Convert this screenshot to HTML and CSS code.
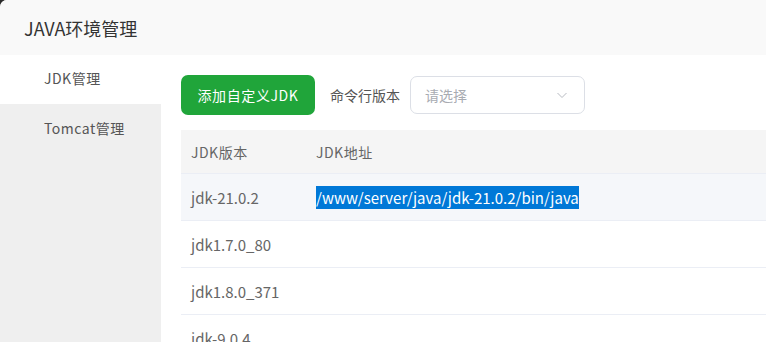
FILE: index.html
```html
<!DOCTYPE html>
<html lang="zh-CN">
<head>
  <meta charset="UTF-8">
  <meta name="viewport" content="width=device-width, initial-scale=1.0">
  <title>JAVA环境管理</title>
  <link rel="stylesheet" href="styles.css">
</head>
<body>
  <div class="dialog">
    <div class="dialog-header">JAVA环境管理</div>

    <div class="dialog-body">
      <ul class="side-menu">
        <li class="active">JDK管理</li>
        <li>Tomcat管理</li>
      </ul>

      <div class="content">
        <div class="toolbar">
          <button class="btn-green">添加自定义JDK</button>
          <span class="toolbar-label">命令行版本</span>
          <div class="select">
            <span class="placeholder">请选择</span>
            <svg class="arrow" width="12" height="12" viewBox="0 0 12 12">
              <path d="M1.5 4 L6 8.5 L10.5 4" fill="none" stroke="#b8bbc2" stroke-width="1"/>
            </svg>
          </div>
        </div>

        <table class="jdk-table">
          <thead>
            <tr>
              <th class="col-version">JDK版本</th>
              <th>JDK地址</th>
            </tr>
          </thead>
          <tbody>
            <tr class="hover">
              <td>jdk-21.0.2</td>
              <td><span class="selected-text">/www/server/java/jdk-21.0.2/bin/java</span></td>
            </tr>
            <tr>
              <td>jdk1.7.0_80</td>
              <td></td>
            </tr>
            <tr>
              <td>jdk1.8.0_371</td>
              <td></td>
            </tr>
            <tr>
              <td>jdk-9.0.4</td>
              <td></td>
            </tr>
          </tbody>
        </table>
      </div>
    </div>
  </div>
</body>
</html>
```

FILE: styles.css
```css
html, body {
  margin: 0;
  padding: 0;
  height: 100%;
}

body {
  background-color: #2b2b2b;
  font-family: 'Noto Sans CJK SC', sans-serif;
  overflow: hidden;
}

.dialog {
  height: 100%;
  background: white;
  border-top-left-radius: 7px;
  overflow: hidden;
  display: flex;
  flex-direction: column;
}

.dialog-header {
  height: 55px;
  flex-shrink: 0;
  box-sizing: border-box;
  padding: 15px 24px 0;
  background-color: #f9f9f9;
  font-size: 18px;
  line-height: 26px;
  color: #333;
}

.dialog-body {
  flex: 1;
  display: flex;
}

.side-menu {
  width: 161px;
  flex-shrink: 0;
  margin: 0;
  padding: 0;
  list-style: none;
  background-color: #efefef;
}

.side-menu li {
  height: 48px;
  line-height: 48px;
  padding-left: 44px;
  font-size: 14px;
  letter-spacing: 0.5px;
  color: #555;
}

.side-menu li.active {
  height: 49px;
  line-height: 47px;
  background: white;
}

.content {
  flex: 1;
  padding: 20px 0 0 20px;
}

.toolbar {
  display: flex;
  align-items: center;
  height: 40px;
  margin-bottom: 15px;
}

.btn-green {
  width: 134px;
  height: 40px;
  padding: 0;
  background-color: #20a53a;
  color: white;
  border: none;
  border-radius: 7px;
  font-family: inherit;
  font-size: 14px;
  letter-spacing: 0.6px;
  cursor: pointer;
}

.toolbar-label {
  margin: 0 10px 0 15px;
  font-size: 14px;
  color: #555;
}

.select {
  width: 175px;
  height: 38px;
  box-sizing: border-box;
  border: 1px solid #dcdfe6;
  border-radius: 7px;
  display: flex;
  align-items: center;
  justify-content: space-between;
  padding: 0 16px 0 14px;
}

.select .placeholder {
  font-size: 14px;
  color: #a8abb2;
}

.jdk-table {
  width: 100%;
  border-collapse: collapse;
  font-size: 15px;
  color: #666;
}

.jdk-table th {
  height: 43px;
  padding: 0 10px;
  text-align: left;
  font-size: 14px;
  letter-spacing: 0.5px;
  font-weight: normal;
  background-color: #f5f5f5;
  color: #666;
}

.jdk-table th.col-version {
  width: 105px;
}

.jdk-table td {
  height: 46px;
  padding: 0 10px;
  border-top: 1px solid #ebeef5;
}

.jdk-table tr.hover td {
  background-color: #f5f7fa;
}

.selected-text {
  background-color: #0078d7;
  color: white;
  padding: 1px 0;
}
```
